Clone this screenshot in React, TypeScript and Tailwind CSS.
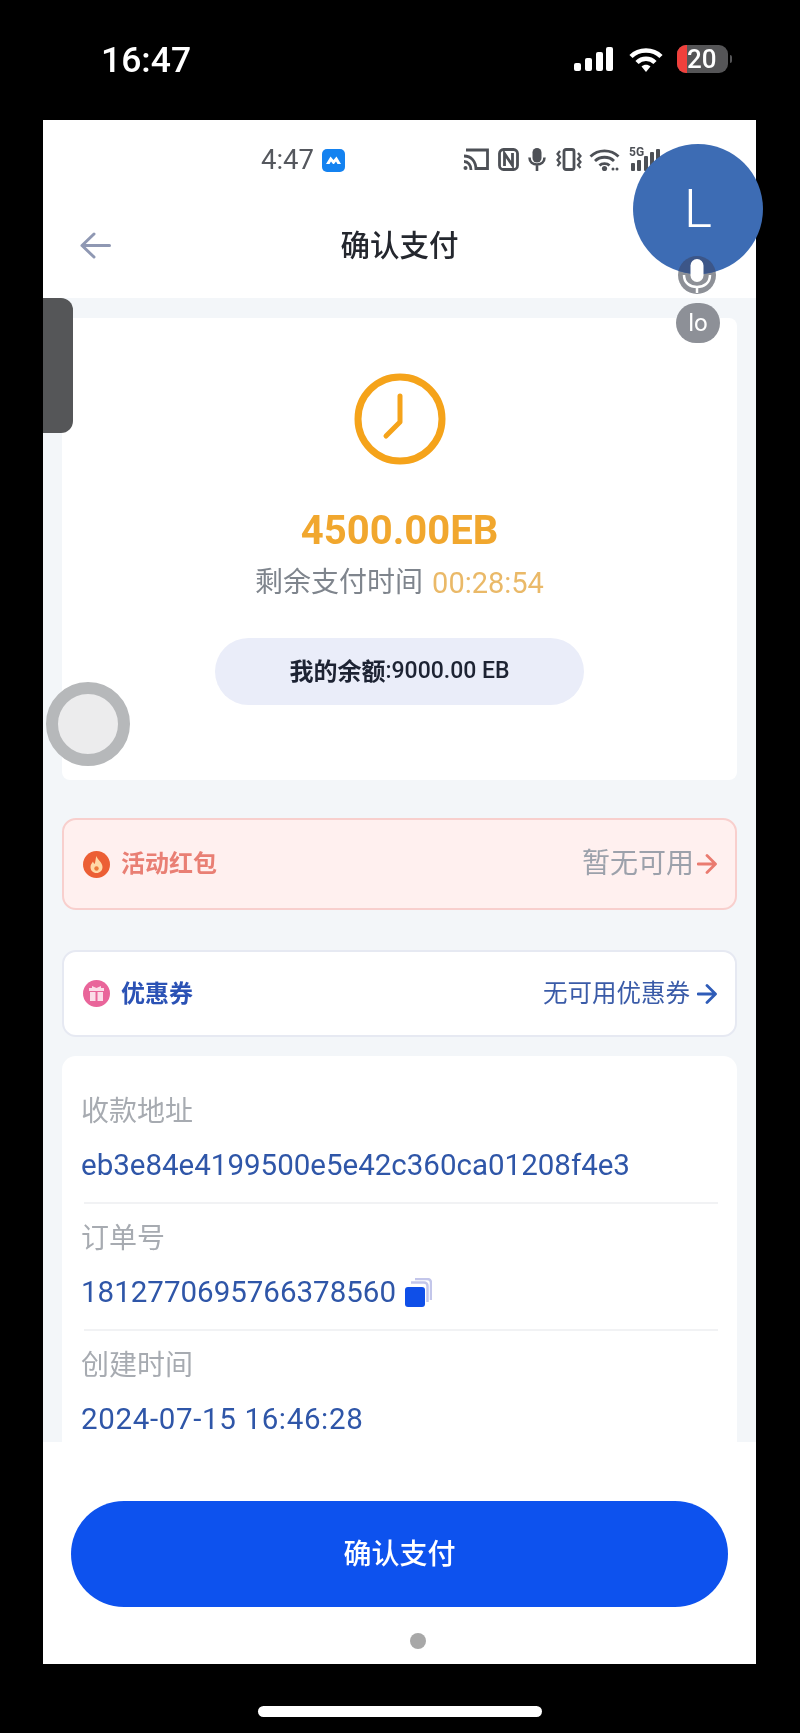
import React from 'react';

const CJK = "font-['Roboto','Noto_Sans_CJK_SC',sans-serif]";

function ArrowRight({ className }: { className: string }) {
  return (
    <svg width="20" height="22" viewBox="0 0 20 22" fill="none" className={className}>
      <path d="M1 11H18M10 2.5L18.5 11L10 19.5" stroke="currentColor" strokeWidth="2.8" strokeLinecap="round" strokeLinejoin="round" />
    </svg>
  );
}

function PhoneStatusIcons() {
  return (
    <div className="absolute left-[463px] top-[148px] flex h-[23px] items-center text-[#4d5056]">
      {/* cast */}
      <svg width="26" height="23" viewBox="0 0 26 23" fill="none" stroke="currentColor" strokeWidth="2.8" className="shrink-0">
        <path d="M3 2H24.500V20.500H14" />
        <path d="M1 8C8 8 13 13 13 22M1 13.500C5 13.500 8 17 8 22" />
        <circle cx="2.500" cy="20" r="2" fill="currentColor" stroke="none" />
      </svg>
      {/* nfc */}
      <svg width="21" height="23" viewBox="0 0 21 23" fill="none" stroke="currentColor" strokeWidth="2.800" className="ml-[9px] shrink-0">
        <rect x="1.500" y="1.500" width="18" height="20" rx="4" />
        <path d="M6.500 18V5.500L14.500 17.500V5" />
      </svg>
      {/* mic */}
      <svg width="18" height="23" viewBox="0 0 18 23" className="ml-[9px] shrink-0">
        <rect x="4.500" y="0" width="9" height="14.500" rx="4.500" fill="currentColor" />
        <path d="M1.500 9.500C1.500 14 5 16.500 9 16.500C13 16.500 16.500 14 16.500 9.500M9 16.500V23" fill="none" stroke="currentColor" strokeWidth="2.600" />
      </svg>
      {/* vibrate */}
      <svg width="26" height="23" viewBox="0 0 26 23" fill="none" stroke="currentColor" strokeWidth="2.200" className="ml-[10px] shrink-0">
        <rect x="8" y="1.500" width="10" height="20" rx="2" strokeWidth="2.800" />
        <path d="M4 3L1.500 6L4 9L1.500 12L4 15L1.500 18M22 5L24.500 8L22 11L24.500 14L22 17L24.500 20" />
      </svg>
      {/* wifi */}
      <svg width="31" height="23" viewBox="0 0 31 23" fill="none" stroke="currentColor" strokeWidth="2.800" className="ml-[7px] shrink-0">
        <path d="M1.500 8.500C9 1 22 1 29.500 8.500M6 13C11 8 20 8 25 13M10.500 17.500C13 15 18 15 20.500 17.500" />
        <circle cx="15.500" cy="20.500" r="2.600" fill="currentColor" stroke="none" />
        <circle cx="24" cy="21" r="1.500" fill="currentColor" stroke="none" />
        <circle cx="28" cy="21" r="1.500" fill="currentColor" stroke="none" />
      </svg>
      {/* 5G signal, runs under the bubble */}
      <div className="relative ml-[9px] h-[23px] w-[34px] shrink-0">
        <span className="absolute left-0 top-[-2px] font-['Roboto',sans-serif] text-[12px] font-bold leading-[12px]">5G</span>
        <svg width="34" height="23" viewBox="0 0 34 23" className="absolute left-0 top-0" fill="currentColor">
          <rect x="2" y="15" width="4" height="8" rx="1" />
          <rect x="8" y="12" width="4" height="11" rx="1" />
          <rect x="15" y="8" width="4" height="15" rx="1" />
          <rect x="21" y="4" width="4" height="19" rx="1" />
          <rect x="27" y="1" width="4" height="22" rx="1" />
        </svg>
      </div>
    </div>
  );
}

function InfoRow({ label, children, divider, wide }: { label: string; children: React.ReactNode; divider?: boolean; wide?: boolean }) {
  return (
    <div>
      <div className="h-[36px] text-[28px] leading-[36px] text-[#a7abb1]">{label}</div>
      <div className={`mt-[15px] flex h-[40px] items-center text-[29.5px] leading-[40px] text-[#2f56a8] ${wide ? 'tracking-[0.65px]' : ''}`}>{children}</div>
      {divider && <div className="ml-[3px] mt-[17px] mb-[17px] h-[2px] bg-[#f1f2f4]" />}
    </div>
  );
}

export default function App() {
  return (
    <div className={`relative flex h-[1733px] w-[800px] flex-col overflow-hidden bg-black blur-[0.4px] ${CJK}`}>
      {/* iOS status bar */}
      <div className="flex h-[120px] shrink-0 items-start pl-[101px] pr-[68px] pt-[40px] text-white">
        <span className="text-[35.500px] font-medium leading-[40px]">16:47</span>
        <div className="ml-auto mt-[5px] flex items-center">
          <svg width="39" height="25" viewBox="0 0 39 25" fill="#fff">
            <rect x="0" y="16" width="7" height="8" rx="2" />
            <rect x="11" y="11" width="7" height="13" rx="2" />
            <rect x="22" y="5" width="7" height="19" rx="2" />
            <rect x="32" y="0" width="7" height="24" rx="2" />
          </svg>
          <svg width="34" height="25" viewBox="0 0 34 25" fill="none" stroke="#fff" strokeWidth="4.500" className="ml-[16px]">
            <path d="M2 9.500C10 1.500 24 1.500 32 9.500M8 15.500C13 10.500 21 10.500 26 15.500" />
            <path d="M12.500 19.500L17 25L21.500 19.500C19 17 15 17 12.500 19.500Z" fill="#fff" stroke="none" />
          </svg>
          <div className="relative ml-[14px] h-[28px] w-[51px] overflow-hidden rounded-[9px] bg-[#555557]">
            <div className="h-full w-[10px] bg-[#f0403c]" />
            <span className="absolute left-[10px] top-0 text-[26px] font-medium leading-[28px]">20</span>
          </div>
          <div className="ml-[2px] h-[8px] w-[2px] rounded-r bg-[#555557]" />
        </div>
      </div>

      {/* recorded phone screen */}
      <div className="ml-[43px] flex h-[1544px] w-[713px] shrink-0 flex-col overflow-hidden bg-white">
        {/* android status row */}
        <div className="flex h-[80px] shrink-0 items-center pl-[218px]">
          <span className="text-[27.500px] leading-[32px] text-[#55585e]">4:47</span>
          <div className="ml-[8px] flex h-[23px] w-[23px] items-center justify-center rounded-[5px] bg-[#1482f0]">
            <svg width="15" height="8" viewBox="0 0 15 8" fill="#fff">
              <path d="M0 8L4.500 .5L7.500 4L10.500 .5L15 8H11.500L10 5.500L8 8H7L5 5.500L3.500 8Z" />
            </svg>
          </div>
        </div>

        {/* title bar */}
        <div className="flex h-[92px] shrink-0 items-center justify-center">
          <span className="text-[29.500px] font-medium leading-[40px] text-[#24272e]">确认支付</span>
        </div>
        <div className="h-[6px] shrink-0" />

        {/* scrolling content */}
        <div className="min-h-0 flex-1 overflow-hidden bg-[#f3f6f9] px-[19px] pt-[20px]">
          <div className="flex flex-col items-center rounded-[8px] bg-white pb-[75px] pt-[55px]">
            <svg width="92" height="92" viewBox="0 0 92 92" fill="none" stroke="#f5a31a" strokeWidth="7" strokeLinecap="round" strokeLinejoin="round">
              <circle cx="46" cy="46" r="42" />
              <path d="M46 23V49L32 63" strokeWidth="5" />
            </svg>
            <div className="mt-[42px] h-[48px] text-[40px] font-bold leading-[48px] text-[#f1a72e]">4500.00EB</div>
            <div className="mt-[10px] flex h-[36px] items-center text-[28px] leading-[36px]">
              <span className="text-[#7f858d]">剩余支付时间</span>
              <span className="ml-[9px] text-[29px] text-[#eab968]">00:28:54</span>
            </div>
            <div className="mt-[37px] flex h-[67px] w-[369px] items-center justify-center rounded-full bg-[#eaedf9] text-[#1d2333]">
              <span className="text-[24px] font-bold">我的余额</span>
              <span className="text-[23px] font-medium">:9000.00 EB</span>
            </div>
          </div>

          <div className="mt-[38px] flex h-[92px] items-center rounded-[14px] border-2 border-[#f8cfcd] bg-[#fff0ef] pl-[19px] pr-[18px]">
            <div className="flex h-[27px] w-[27px] items-center justify-center rounded-full bg-[#ec5f35]">
              <svg width="13" height="17" viewBox="0 0 13 17">
                <path fill="#ffd9a8" d="M6.500 0C7 3.500 12.500 6 12.500 11C12.500 14.500 10 17 6.500 17C3 17 .5 14.500 .5 11C.5 8.500 2 7 3 5.500C3.500 7 4 7.500 4.800 8C5.500 5.500 5.500 2.500 6.500 0Z" />
                <circle cx="6.500" cy="12.500" r="2.200" fill="#ec7a3c" />
              </svg>
            </div>
            <span className="ml-[11px] text-[24px] font-bold leading-[32px] text-[#e97f74]">活动红包</span>
            <span className="ml-auto text-[28px] leading-[36px] text-[#9ca1ab]">暂无可用</span>
            <ArrowRight className="ml-[3px] text-[#ea7b70]" />
          </div>

          <div className="mt-[40px] flex h-[87px] items-center rounded-[14px] border-2 border-[#e6e9f2] bg-white pl-[19px] pr-[18px]">
            <div className="flex h-[27px] w-[27px] items-center justify-center rounded-full bg-[#e9659a]">
              <svg width="15" height="15" viewBox="0 0 15 15" fill="#fbdde8">
                <rect x="0" y="2" width="15" height="3" />
                <rect x="1" y="6" width="5.500" height="9" />
                <rect x="8.500" y="6" width="5.500" height="9" />
                <path d="M3 0L7.500 2H3ZM12 0L7.500 2H12Z" />
              </svg>
            </div>
            <span className="ml-[11px] text-[24px] font-bold leading-[32px] text-[#2b52b5]">优惠券</span>
            <span className="ml-auto text-[24.500px] leading-[32px] text-[#3a5ba8]">无可用优惠券</span>
            <ArrowRight className="ml-[7px] text-[#2f5cb8]" />
          </div>

          <div className="mt-[19px] rounded-[14px] bg-white pb-[20px] pl-[19px] pr-[19px] pt-[38px]">
            <InfoRow label="收款地址" divider>eb3e84e4199500e5e42c360ca01208f4e3</InfoRow>
            <InfoRow label="订单号" divider>
              1812770695766378560
              <svg width="27" height="29" viewBox="0 0 27 29" className="ml-[9px]">
                <path d="M10 1H22C24.500 1 26 2.500 26 5V22" fill="none" stroke="#c3c6ea" strokeWidth="2.500" />
                <path d="M6 4.500H19C21 4.500 22.500 6 22.500 8V24" fill="none" stroke="#c3c6ea" strokeWidth="2.500" />
                <rect x="0" y="9" width="20" height="20" rx="3" fill="#0f4fe8" />
              </svg>
            </InfoRow>
            <InfoRow label="创建时间" wide>2024-07-15 16:46:28</InfoRow>
          </div>
        </div>

        {/* bottom action */}
        <div className="flex h-[222px] shrink-0 flex-col items-center bg-white pt-[59px]">
          <button className="flex h-[106px] w-[657px] items-center justify-center rounded-full bg-[#0d52ee] pt-[2px] text-[28px] font-medium text-white">
            确认支付
          </button>
          <div className="mr-[-36px] mt-[26px] h-[16px] w-[16px] rounded-full bg-[#a8a8a8]" />
        </div>
      </div>

      {/* home indicator */}
      <div className="mx-auto mt-[42px] h-[11px] w-[284px] rounded-full bg-white" />

      {/* overlays from the recording */}
      <svg width="31" height="27" viewBox="0 0 31 27" fill="none" stroke="#8f98b3" strokeWidth="3" strokeLinecap="round" strokeLinejoin="round" className="absolute left-[80px] top-[232px]">
        <path d="M29.500 13.500H2M14 2L2 13.500L14 25" />
      </svg>
      <PhoneStatusIcons />
      <div className="absolute left-[43px] top-[298px] h-[135px] w-[30px] rounded-r-[12px] bg-[#555658]" />
      <div className="absolute left-[46px] top-[682px] h-[84px] w-[84px] rounded-full border-[12px] border-[#b6b8ba] bg-[#ececed]" />
      <div className="absolute left-[678px] top-[256px] h-[38px] w-[38px] rounded-full bg-[#8d9097]" />
      <div className="absolute left-[633px] top-[144px] flex h-[130px] w-[130px] items-center justify-center overflow-hidden rounded-full bg-[#3d6cb4] text-[53px] font-light leading-none text-white">
        L
        {/* mic button showing through the bubble */}
        <div className="absolute left-[45px] top-[112px] h-[38px] w-[38px] rounded-full bg-[#3c5688]" />
      </div>
      <svg width="36" height="38" viewBox="0 0 36 38" fill="none" className="absolute left-[679px] top-[256px]">
        <rect x="11.500" y="3" width="13" height="23" rx="6.500" fill="#fff" />
        <path d="M5 19C5 27 11 31 18 31C25 31 31 27 31 19M18 31V37" stroke="#fff" strokeWidth="2.500" />
      </svg>
      <div className="absolute left-[676px] top-[303px] flex h-[40px] w-[44px] items-center justify-center rounded-full bg-[#8d9097] text-[24px] leading-none text-white">
        lo
      </div>
    </div>
  );
}
